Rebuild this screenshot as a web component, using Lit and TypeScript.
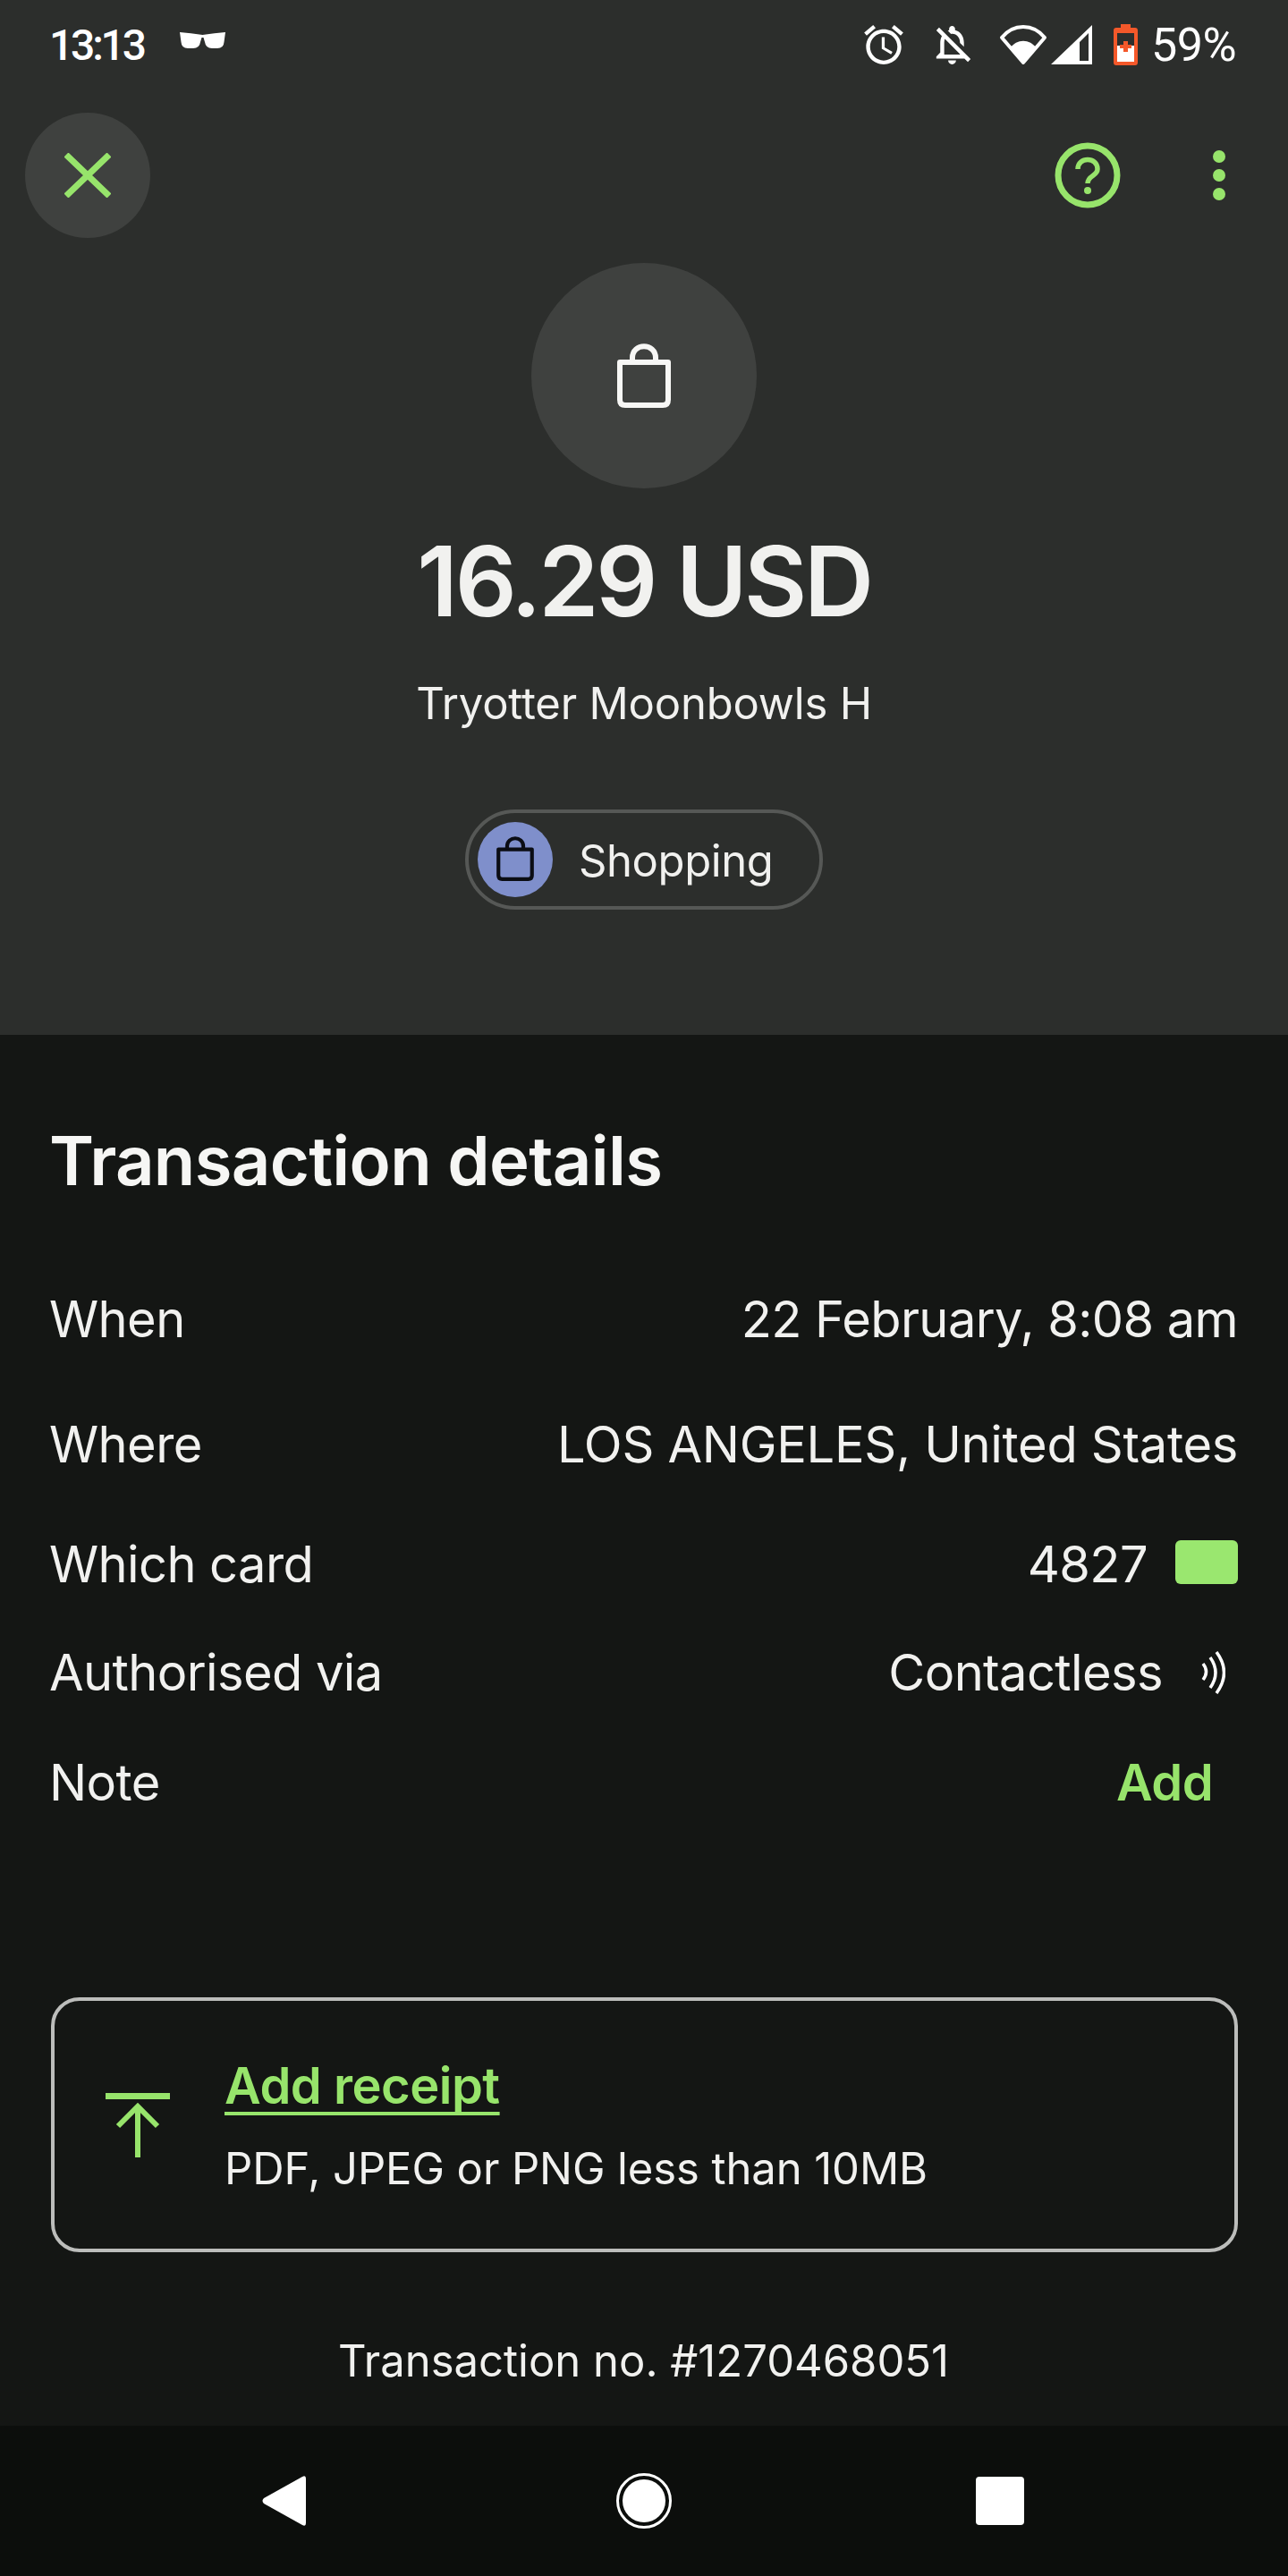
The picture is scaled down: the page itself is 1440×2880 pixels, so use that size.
import { LitElement, css, html } from "lit";
import { customElement } from "lit/decorators.js";

const bag = (size: string) => html`
  <svg class=${size} viewBox="0 0 60 72" fill="none" stroke="currentColor" stroke-width="6">
    <path d="M3 21H57V63Q57 69 51 69H9Q3 69 3 63Z" stroke-linejoin="round" />
    <path d="M17 21V16C17 -1 43 -1 43 16V21" />
  </svg>
`;

@customElement("app-root")
export class AppRoot extends LitElement {
  static styles = css`
    :host {
      display: block;
      width: 1440px;
      height: 2880px;
      font-family: Inter, "Liberation Sans", sans-serif;
      color: #f1f1ef;
      background: #141614;
    }
    svg {
      display: block;
      flex: none;
    }
    .page {
      display: flex;
      flex-direction: column;
      height: 100%;
    }
    .top {
      height: 1157px;
      flex: none;
      background: #2c2e2c;
      display: flex;
      flex-direction: column;
      align-items: center;
    }
    .status {
      align-self: stretch;
      height: 100px;
      padding: 0 58px 0 55px;
      display: flex;
      align-items: center;
      color: #fff;
      font-family: Roboto, sans-serif;
      font-size: 48px;
      font-weight: 500;
    }
    .time {
      letter-spacing: -3.2px;
      width: 146px;
    }
    .glasses {
      width: 51px;
      height: 19px;
      margin-bottom: 11px;
    }
    .status-right {
      margin-left: auto;
      display: flex;
      align-items: center;
    }
    .alarm {
      width: 44px;
      height: 44px;
      margin-right: 34px;
    }
    .bell {
      width: 44px;
      height: 43px;
      margin-right: 29px;
    }
    .wifi {
      width: 54px;
      height: 45px;
      margin-right: 4px;
    }
    .signal {
      width: 46px;
      height: 44px;
      margin-right: 24px;
    }
    .battery {
      width: 27px;
      height: 46px;
      margin-right: 15px;
    }
    .pct {
      font-size: 52px;
      font-weight: 400;
      letter-spacing: -0.5px;
    }
    .toolbar {
      align-self: stretch;
      margin-top: 26px;
      padding: 0 70px 0 28px;
      display: flex;
      align-items: center;
      color: #97e46b;
    }
    .close {
      width: 140px;
      height: 140px;
      border-radius: 50%;
      background: #3f413f;
      display: flex;
      align-items: center;
      justify-content: center;
      margin-right: auto;
    }
    .close svg {
      width: 52px;
      height: 50px;
    }
    .help {
      width: 74px;
      height: 74px;
      margin-right: 103px;
    }
    .dots {
      width: 14px;
      height: 56px;
    }
    .hero {
      width: 252px;
      height: 252px;
      margin-top: 28px;
      border-radius: 50%;
      background: #3f413f;
      display: flex;
      align-items: center;
      justify-content: center;
    }
    .bag-lg {
      width: 60px;
      height: 72px;
      color: #f7f7f5;
    }
    .amount {
      margin-top: 44px;
      font-size: 108px;
      line-height: 120px;
      font-weight: 600;
      letter-spacing: -3.3px;
    }
    .merchant {
      margin-top: 42px;
      font-size: 49px;
      line-height: 70px;
      letter-spacing: -0.2px;
    }
    .pill {
      box-sizing: border-box;
      margin-top: 83px;
      width: 400px;
      height: 112px;
      border: 4px solid #565856;
      border-radius: 56px;
      padding-left: 10px;
      display: flex;
      align-items: center;
      gap: 29px;
      font-size: 49px;
      letter-spacing: -0.4px;
    }
    .pill span {
      padding-top: 2px;
    }
    .pill-icon {
      width: 84px;
      height: 84px;
      border-radius: 50%;
      background: #7f8fcb;
      color: #0b0d14;
      display: flex;
      align-items: center;
      justify-content: center;
    }
    .bag-sm {
      width: 42px;
      height: 50px;
      margin-bottom: 2px;
    }
    .details {
      flex: 1;
      padding: 100px 56px 0 55px;
      display: flex;
      flex-direction: column;
    }
    h2 {
      margin: 0 0 68px;
      font-size: 76px;
      line-height: 80px;
      font-weight: 600;
      letter-spacing: -0.7px;
      color: #f6f6f4;
    }
    .row {
      display: flex;
      align-items: center;
      justify-content: space-between;
      font-size: 56px;
      letter-spacing: -0.6px;
    }
    .row-a {
      height: 140px;
    }
    .row-b {
      height: 128px;
    }
    .row-c {
      height: 114px;
    }
    .row-d {
      height: 132px;
    }
    .place {
      letter-spacing: -0.3px;
    }
    .val {
      display: flex;
      align-items: center;
    }
    .card {
      width: 70px;
      height: 49px;
      margin: 0 0 5px 31px;
      border-radius: 6px;
      background: #9ae76f;
    }
    .waves {
      width: 27px;
      height: 48px;
      margin: 0 14px 0 43px;
    }
    .add {
      color: #97e46b;
      font-weight: 600;
      margin-right: 28px;
    }
    .receipt {
      box-sizing: border-box;
      margin: 174px 0 0 2px;
      height: 285px;
      border: 4px solid #bcbdbb;
      border-radius: 32px;
      padding-left: 57px;
      display: flex;
      align-items: center;
      gap: 61px;
    }
    .upload {
      width: 72px;
      height: 72px;
      color: #97e46b;
    }
    .receipt-text {
      display: flex;
      flex-direction: column;
      gap: 28px;
    }
    .receipt-title {
      font-size: 56px;
      line-height: 70px;
      font-weight: 600;
      letter-spacing: -0.5px;
      color: #97e46b;
      text-decoration: underline;
      text-decoration-thickness: 4px;
      text-underline-offset: 9px;
      text-decoration-skip-ink: none;
    }
    .receipt-sub {
      font-size: 49px;
      line-height: 60px;
      letter-spacing: -0.1px;
    }
    .txn {
      margin-top: 87px;
      font-size: 49px;
      line-height: 70px;
      text-align: center;
    }
    .nav {
      height: 168px;
      flex: none;
      background: #0c0e0c;
      display: flex;
      align-items: center;
      color: #fff;
      padding: 0 295px 0 293px;
      justify-content: space-between;
    }
    .back {
      width: 49px;
      height: 56px;
    }
    .home {
      width: 62px;
      height: 62px;
      margin-left: 7px;
    }
    .recent {
      width: 54px;
      height: 54px;
      border-radius: 4px;
      background: #fff;
    }
  `;

  render() {
    return html`
      <div class="page">
        <section class="top">
          <div class="status">
            <span class="time">13:13</span>
            <svg class="glasses" viewBox="0 0 51 19" fill="currentColor">
              <path d="M0 1Q12 2 25.5 4Q39 2 51 1L49.5 12Q49 19 42 19H36Q29 19 28 12L26.5 7H24.5L23 12Q22 19 15 19H9Q2 19 1.5 12Z" />
            </svg>
            <div class="status-right">
              <svg class="alarm" viewBox="2 1.86 20 20.14" fill="currentColor">
                <path d="M22 5.72l-4.6-3.86-1.29 1.53 4.6 3.86L22 5.72zM7.88 3.39L6.6 1.86 2 5.71l1.29 1.53 4.59-3.85zM12.5 8H11v6l4.75 2.85.75-1.23-4-2.37V8zM12 4c-4.97 0-9 4.03-9 9s4.02 9 9 9c4.97 0 9-4.03 9-9s-4.03-9-9-9zm0 16c-3.87 0-7-3.13-7-7s3.13-7 7-7 7 3.13 7 7-3.13 7-7 7z" />
              </svg>
              <svg class="bell" viewBox="4 2.5 17.4 19.5" fill="currentColor">
                <path d="M12 22c1.1 0 2-.9 2-2h-4c0 1.1.9 2 2 2zm0-15.5c2.49 0 4 2.02 4 4.5v.1l2 2V11c0-3.07-1.63-5.64-4.5-6.32V4c0-.83-.67-1.5-1.5-1.5s-1.5.67-1.5 1.5v.68c-.24.06-.47.15-.69.23l1.64 1.64c.18-.02.36-.05.55-.05zM5.41 3.35L4 4.76l2.81 2.81C6.29 8.57 6 9.74 6 11v5l-2 2v1h14.24l1.74 1.74 1.41-1.41L5.41 3.35zM16 17H8v-6c0-.68.12-1.32.34-1.9L16 16.76V17z" />
              </svg>
              <svg class="wifi" viewBox="0 0 54 45">
                <path d="M27 42L3 14C16 -2 38 -2 51 14Z" fill="none" stroke="currentColor" stroke-width="4" stroke-linejoin="round" />
                <path d="M27 44L12 26C20 15 34 15 42 26Z" fill="currentColor" />
              </svg>
              <svg class="signal" viewBox="0 0 46 44" fill="currentColor">
                <path fill-rule="evenodd" d="M0 44L46 0V44ZM32 40H42V9L32 19Z" />
              </svg>
              <svg class="battery" viewBox="0 0 27 46">
                <path d="M8 0H19V4H24Q27 4 27 7V43Q27 46 24 46H3Q0 46 0 43V7Q0 4 3 4H8Z" fill="#f4582a" />
                <rect x="4" y="10" width="19" height="14" fill="#2c2e2c" />
                <rect x="4" y="24" width="19" height="18" fill="#fff" />
                <path d="M11 19H16V23H20V27H16V31H11V27H7V23H11Z" fill="#f4582a" />
              </svg>
              <span class="pct">59%</span>
            </div>
          </div>

          <div class="toolbar">
            <div class="close">
              <svg viewBox="0 0 52 50" fill="none" stroke="currentColor" stroke-width="7">
                <path d="M2 2L50 48M50 2L2 48" />
              </svg>
            </div>
            <svg class="help" viewBox="0 0 74 74" fill="none" stroke="currentColor" stroke-width="7">
              <circle cx="37" cy="37" r="33" />
              <path d="M26 30C26 16 48 16 48 30C48 38 37 37 37 46" stroke-width="5.5" />
              <circle cx="37" cy="54" r="4" fill="currentColor" stroke="none" />
            </svg>
            <svg class="dots" viewBox="0 0 14 56" fill="currentColor">
              <circle cx="7" cy="7" r="7" />
              <circle cx="7" cy="28" r="7" />
              <circle cx="7" cy="49" r="7" />
            </svg>
          </div>

          <div class="hero">${bag("bag-lg")}</div>
          <div class="amount">16.29 USD</div>
          <div class="merchant">Tryotter Moonbowls H</div>
          <div class="pill">
            <div class="pill-icon">${bag("bag-sm")}</div>
            <span>Shopping</span>
          </div>
        </section>

        <section class="details">
          <h2>Transaction details</h2>
          <div class="row row-a"><span>When</span><span>22 February, 8:08 am</span></div>
          <div class="row row-a"><span>Where</span><span class="place">LOS ANGELES, United States</span></div>
          <div class="row row-b">
            <span>Which card</span>
            <span class="val">4827<span class="card"></span></span>
          </div>
          <div class="row row-c">
            <span>Authorised via</span>
            <span class="val">
              Contactless
              <svg class="waves" viewBox="0 0 27 48" fill="none" stroke="#fff" stroke-width="3.5">
                <path d="M2 14Q9 23 2 32M10 7Q22 24 10 41M17 1Q34 24 17 47" />
              </svg>
            </span>
          </div>
          <div class="row row-d"><span>Note</span><span class="add">Add</span></div>

          <div class="receipt">
            <svg class="upload" viewBox="0 0 72 72" fill="none" stroke="currentColor" stroke-width="6">
              <path d="M0 3.5H72" stroke-width="7" />
              <path d="M36 72V17M14 37L36 15L58 37" />
            </svg>
            <div class="receipt-text">
              <span class="receipt-title">Add receipt</span>
              <span class="receipt-sub">PDF, JPEG or PNG less than 10MB</span>
            </div>
          </div>

          <div class="txn">Transaction no. #1270468051</div>
        </section>

        <nav class="nav">
          <svg class="back" viewBox="0 0 49 56" fill="currentColor">
            <path d="M45 1Q49 -1 49 3V53Q49 57 45 55L2 31Q-1 28 2 25Z" />
          </svg>
          <svg class="home" viewBox="0 0 62 62">
            <circle cx="31" cy="31" r="29.5" fill="none" stroke="currentColor" stroke-width="3" />
            <circle cx="31" cy="31" r="24" fill="currentColor" />
          </svg>
          <div class="recent"></div>
        </nav>
      </div>
    `;
  }
}
